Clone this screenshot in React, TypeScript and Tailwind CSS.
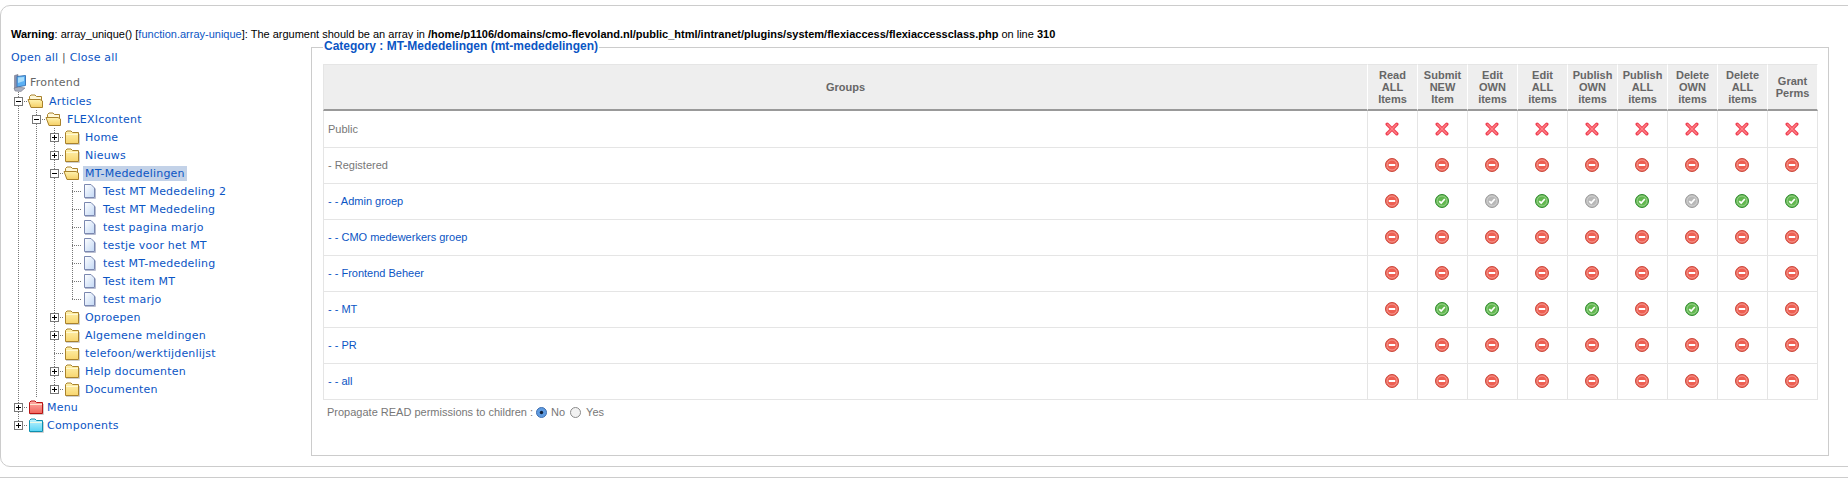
const LINK = "text-[#0b55c4]";

type Cell = "line" | "blank" | "plus" | "minus" | "join" | "corner" | "plusEnd";
type Icon = "folder" | "folderOpen" | "doc" | "red" | "cyan";

type TreeRow = {
  label: string;
  indent: Cell[];
  cell: Cell;
  icon: Icon;
  selected?: boolean;
};

const treeRows: TreeRow[] = [
  { label: "Articles", indent: [], cell: "minus", icon: "folderOpen" },
  { label: "FLEXIcontent", indent: ["line"], cell: "minus", icon: "folderOpen" },
  { label: "Home", indent: ["line", "line"], cell: "plus", icon: "folder" },
  { label: "Nieuws", indent: ["line", "line"], cell: "plus", icon: "folder" },
  { label: "MT-Mededelingen", indent: ["line", "line"], cell: "minus", icon: "folderOpen", selected: true },
  { label: "Test MT Mededeling 2", indent: ["line", "line", "line"], cell: "join", icon: "doc" },
  { label: "Test MT Mededeling", indent: ["line", "line", "line"], cell: "join", icon: "doc" },
  { label: "test pagina marjo", indent: ["line", "line", "line"], cell: "join", icon: "doc" },
  { label: "testje voor het MT", indent: ["line", "line", "line"], cell: "join", icon: "doc" },
  { label: "test MT-mededeling", indent: ["line", "line", "line"], cell: "join", icon: "doc" },
  { label: "Test item MT", indent: ["line", "line", "line"], cell: "join", icon: "doc" },
  { label: "test marjo", indent: ["line", "line", "line"], cell: "corner", icon: "doc" },
  { label: "Oproepen", indent: ["line", "line"], cell: "plus", icon: "folder" },
  { label: "Algemene meldingen", indent: ["line", "line"], cell: "plus", icon: "folder" },
  { label: "telefoon/werktijdenlijst", indent: ["line", "line"], cell: "join", icon: "folder" },
  { label: "Help documenten", indent: ["line", "line"], cell: "plus", icon: "folder" },
  { label: "Documenten", indent: ["line", "line"], cell: "plusEnd", icon: "folder" },
  { label: "Menu", indent: [], cell: "plus", icon: "red" },
  { label: "Components", indent: [], cell: "plusEnd", icon: "cyan" },
];

const columns = [
  ["Read", "ALL", "Items"],
  ["Submit", "NEW", "Item"],
  ["Edit", "OWN", "items"],
  ["Edit", "ALL", "items"],
  ["Publish", "OWN", "items"],
  ["Publish", "ALL", "items"],
  ["Delete", "OWN", "items"],
  ["Delete", "ALL", "items"],
  ["Grant", "Perms"],
];

type Perm = "x" | "r" | "g" | "n";

const groups: { name: string; link: boolean; perms: Perm[] }[] = [
  { name: "Public", link: false, perms: ["x", "x", "x", "x", "x", "x", "x", "x", "x"] },
  { name: "- Registered", link: false, perms: ["r", "r", "r", "r", "r", "r", "r", "r", "r"] },
  { name: "- - Admin groep", link: true, perms: ["r", "g", "n", "g", "n", "g", "n", "g", "g"] },
  { name: "- - CMO medewerkers groep", link: true, perms: ["r", "r", "r", "r", "r", "r", "r", "r", "r"] },
  { name: "- - Frontend Beheer", link: true, perms: ["r", "r", "r", "r", "r", "r", "r", "r", "r"] },
  { name: "- - MT", link: true, perms: ["r", "g", "g", "r", "g", "r", "g", "r", "r"] },
  { name: "- - PR", link: true, perms: ["r", "r", "r", "r", "r", "r", "r", "r", "r"] },
  { name: "- - all", link: true, perms: ["r", "r", "r", "r", "r", "r", "r", "r", "r"] },
];

function TreeCell({ type }: { type: Cell }) {
  const dots = "#777";
  const hasBox = type === "plus" || type === "minus" || type === "plusEnd";
  const goesDown = type !== "corner" && type !== "plusEnd" && type !== "blank";
  return (
    <svg width="18" height="18" viewBox="0 0 18 18" className="shrink-0">
      {type !== "blank" && (
        <path d={`M9.5 0V${goesDown ? 18 : 9}`} stroke={dots} strokeWidth="1" strokeDasharray="1 1" />
      )}
      {type !== "line" && type !== "blank" && (
        <path d="M9 9.5H18" stroke={dots} strokeWidth="1" strokeDasharray="1 1" />
      )}
      {hasBox && (
        <>
          <rect x="5.5" y="5.5" width="8" height="8" fill="#fff" stroke="#777" />
          <path d="M7 9.5H12" stroke="#000" />
          {type !== "minus" && <path d="M9.5 7V12" stroke="#000" />}
        </>
      )}
    </svg>
  );
}

function TreeIcon({ icon }: { icon: Icon }) {
  if (icon === "doc") {
    return (
      <svg width="18" height="18" viewBox="0 0 18 18" className="shrink-0">
        <defs>
          <linearGradient id="docFill" x1="0" y1="0" x2="1" y2="1">
            <stop offset="0" stopColor="#ffffff" />
            <stop offset="1" stopColor="#c3d8f5" />
          </linearGradient>
        </defs>
        <path d="M3.5 2.5H10L13.5 6V15.5H3.5Z" fill="url(#docFill)" stroke="#7b88b0" />
        <path d="M4 16.5H14.5V6.5" fill="none" stroke="#b8bdd0" />
      </svg>
    );
  }
  const palette = {
    folder: ["#fff3b0", "#f8d56e", "#a9822c"],
    folderOpen: ["#fff3b0", "#f5cf65", "#a9822c"],
    red: ["#ffb0a8", "#f0645c", "#b81414"],
    cyan: ["#c4f4ff", "#58d4f4", "#0e8fae"],
  }[icon];
  const gradient = `tree-${icon}`;
  return (
    <svg width="18" height="18" viewBox="0 0 18 18" className="shrink-0">
      <defs>
        <linearGradient id={gradient} x1="0" y1="0" x2="0" y2="1">
          <stop offset="0" stopColor={palette[0]} />
          <stop offset="1" stopColor={palette[1]} />
        </linearGradient>
      </defs>
      {icon === "folderOpen" ? (
        <>
          <path d="M2.5 6V4.5L4 3H8L9.5 4.5H14.5V14.5H4Z" fill="#fff8d8" stroke={palette[2]} />
          <path d="M1 7.5H13L15.5 9V15.5H4Z" fill={`url(#${gradient})`} stroke={palette[2]} />
        </>
      ) : (
        <>
          <path d="M2.5 15.5V4.5L4 3H8L9.5 4.5H15.5V15.5Z" fill={`url(#${gradient})`} stroke={palette[2]} />
          <path d="M3 6.5H15" stroke="#fffbe0" strokeOpacity="0.8" />
          <path d="M3 16.5H16.5V6" fill="none" stroke="#cfcfcf" />
        </>
      )}
    </svg>
  );
}

function FrontendIcon() {
  return (
    <svg width="18" height="18" viewBox="0 0 18 18" className="shrink-0">
      <path d="M5.5 1.5L9 0.5V13L5.5 15Z" fill="#8b93b0" stroke="#667" strokeWidth="0.5" />
      <path d="M8 2.5L16.5 1.5V11.5L8 13Z" fill="#5ab0f5" stroke="#3f79b8" />
      <path d="M9 3.5L15 3V7L9 9Z" fill="#a9defc" />
      <path d="M5 14L10 13L16 14L12 17.5L6 17Z" fill="#aab0c0" stroke="#667" strokeWidth="0.5" />
    </svg>
  );
}

function PermIcon({ type }: { type: Perm }) {
  if (type === "x") {
    return (
      <svg width="14" height="14" viewBox="0 0 14 14" className="block">
        <path d="M2.2 2.2L11.8 11.8M11.8 2.2L2.2 11.8" stroke="#ef3f52" strokeWidth="3.4" strokeLinecap="round" />
        <path d="M2.6 2.6L11.4 11.4M11.4 2.6L2.6 11.4" stroke="#ff7f84" strokeWidth="1.4" strokeLinecap="round" />
      </svg>
    );
  }
  const colors = {
    r: ["#c9483c", "#ee5f52"],
    g: ["#2f8a2f", "#62b84f"],
    n: ["#9a9a9a", "#b8b8b8"],
  }[type];
  return (
    <svg width="14" height="14" viewBox="0 0 14 14" className="block">
      <circle cx="7" cy="7" r="6.5" fill={colors[1]} stroke={colors[0]} />
      <circle cx="7" cy="7" r="5" fill="none" stroke="#fff" strokeOpacity="0.35" />
      {type === "r" ? (
        <rect x="3.8" y="6" width="6.4" height="2" fill="#fff" />
      ) : (
        <path d="M4.3 7.2L6.2 9.1L9.8 5" fill="none" stroke="#fff" strokeWidth="1.7" />
      )}
    </svg>
  );
}

function Radio({ checked }: { checked?: boolean }) {
  return (
    <svg width="11" height="11" viewBox="0 0 11 11" className="shrink-0">
      <circle cx="5.5" cy="5.5" r="5" fill={checked ? "#5f9be0" : "#f2f2f2"} stroke={checked ? "#3f6fb0" : "#8a8a8a"} />
      {checked && <circle cx="5.5" cy="5.5" r="1.7" fill="#10203a" />}
    </svg>
  );
}

export default function App() {
  return (
    <div className="h-[479px] overflow-hidden bg-white pt-[5px] font-['Liberation_Sans',Arial,sans-serif] text-[11px]">
      <div className="-mr-[20px] h-[462px] rounded-[10px] border border-[#cccccc] pt-[21px]">
        <div className="ml-[10px] h-[14px] leading-[14px] whitespace-nowrap text-[#000]">
          <b>Warning</b>: array_unique() [<span className={LINK}>function.array-unique</span>]: The argument should be an
          array in <b>/home/p1106/domains/cmo-flevoland.nl/public_html/intranet/plugins/system/flexiaccess/flexiaccessclass.php</b> on
          line <b>310</b>
        </div>

        <div className="flex">
          <div className="w-[310px] shrink-0 pl-[10px] pt-[8px] font-['DejaVu_Sans',Verdana,sans-serif] text-[11px]">
            <div className={`h-[18px] leading-[18px] tracking-[0.2px] ${LINK}`}>
              Open all <span className="text-[#555]">|</span> Close all
            </div>
            <div className="mt-[7px] -ml-[2px]">
              <div className="flex h-[18px] items-center text-[#666]">
                <FrontendIcon />
                <span className="ml-[3px] tracking-[0.2px]">Frontend</span>
              </div>
              {treeRows.map((row) => (
                <div key={row.label} className="flex h-[18px] items-center whitespace-nowrap">
                  {row.indent.map((c, i) => (
                    <TreeCell key={i} type={c} />
                  ))}
                  <TreeCell type={row.cell} />
                  <TreeIcon icon={row.icon} />
                  <span
                    className={`px-[2px] leading-[15px] tracking-[0.2px] ${LINK} ${row.indent.length === 0 && row.cell !== "minus" ? "" : "ml-[2px]"} ${row.selected ? "bg-[#c3d2e8]" : ""}`}
                  >
                    {row.label}
                  </span>
                </div>
              ))}
            </div>
          </div>

          <div className="relative mt-[6px] h-[409px] w-[1518px] shrink-0 border border-[#cccccc] pt-[16px] pl-[11px]">
            <div className="absolute -top-[9px] left-[11px] bg-white px-[1px] text-[12px] leading-[15px] font-bold whitespace-nowrap text-[#0b55c4]">
              Category : MT-Mededelingen (mt-mededelingen)
            </div>
            <table className="w-[1495px] table-fixed border-separate border-spacing-0 text-[11px] text-[#666]">
              <thead>
                <tr>
                  <th className="h-[47px] border-t border-r border-l border-b-2 border-t-[#e5e5e5] border-r-white border-l-[#e5e5e5] border-b-[#999] bg-[#eeeeee] font-bold">
                    Groups
                  </th>
                  {columns.map((lines, i) => (
                    <th
                      key={i}
                      className="w-[50px] border-t border-r border-b-2 border-t-[#e5e5e5] border-r-white border-b-[#999] bg-[#eeeeee] leading-[12px] font-bold"
                    >
                      {lines.map((l) => (
                        <div key={l}>{l}</div>
                      ))}
                    </th>
                  ))}
                </tr>
              </thead>
              <tbody>
                {groups.map((g, rowIdx) => (
                  <tr key={g.name} className={rowIdx === 0 ? "h-[37px]" : "h-[36px]"}>
                    <td
                      className={`border-r border-b border-l border-[#e5e5e5] pl-[4px] ${rowIdx === 0 ? "" : "pb-[1px]"} ${g.link ? LINK : "text-[#777]"}`}
                    >
                      {g.name}
                    </td>
                    {g.perms.map((p, i) => (
                      <td key={i} className={`border-r border-b border-[#e5e5e5] pr-[1px] ${rowIdx === 0 ? "" : "pb-[1px]"}`}>
                        <div className="flex justify-center">
                          <PermIcon type={p} />
                        </div>
                      </td>
                    ))}
                  </tr>
                ))}
              </tbody>
            </table>
            <div className="mt-[5px] ml-[4px] flex items-center text-[11px] leading-[14px] text-[#777]">
              <span>Propagate READ permissions to children :</span>
              <span className="ml-[3px]">
                <Radio checked />
              </span>
              <span className="ml-[4px]">No</span>
              <span className="ml-[5px]">
                <Radio />
              </span>
              <span className="ml-[5px]">Yes</span>
            </div>
          </div>
        </div>
      </div>
      <div className="mt-[10px] border-t border-[#cccccc]" />
    </div>
  );
}
